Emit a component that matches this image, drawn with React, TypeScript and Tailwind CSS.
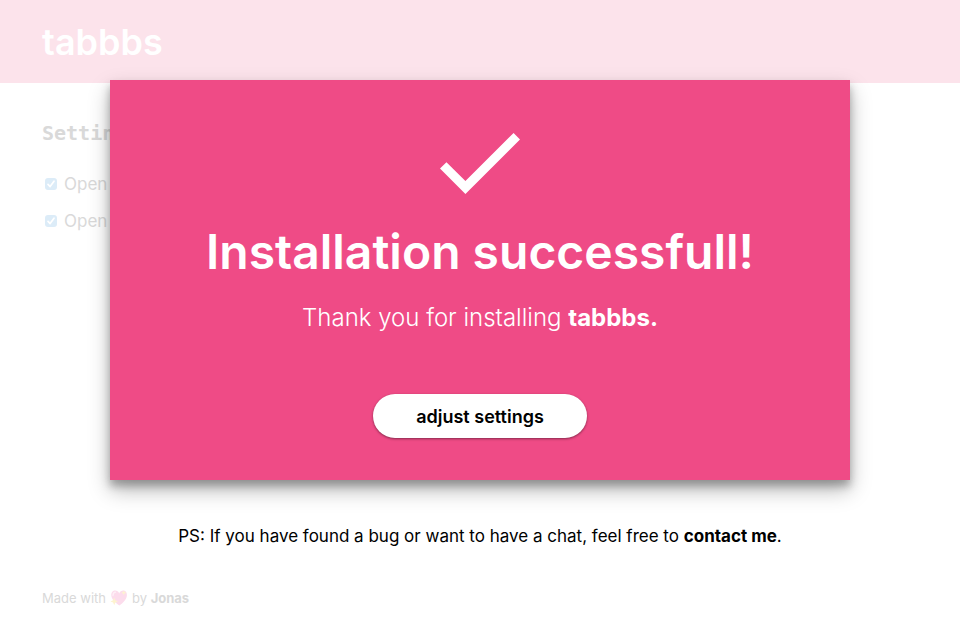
import React from "react";

function Setting({ id, label }: { id: string; label: string }) {
  return (
    <div className="flex h-[37px] items-center gap-[7px] pl-[3px]">
      <span className="grid size-3 place-items-center">
        <input
          id={id}
          type="checkbox"
          defaultChecked
          className="col-start-1 row-start-1 size-3 appearance-none rounded-[3px] bg-[#dcecf8]"
        />
        <svg
          viewBox="0 0 12 12"
          className="pointer-events-none col-start-1 row-start-1 size-3"
          fill="none"
          stroke="white"
          strokeWidth="1.7"
          strokeLinecap="round"
          strokeLinejoin="round"
          aria-hidden="true"
        >
          <path d="M3 6.4 5.1 8.6 9 3.2" />
        </svg>
      </span>
      <label htmlFor={id} className="text-[17px] leading-6">
        {label}
      </label>
    </div>
  );
}

function Heart() {
  return (
    <svg viewBox="0 0 18 18" className="size-[18px]" role="img" aria-label="love">
      <path
        d="M9.4 16.6C5.4 13.8 1.6 10.6 1.3 6.6 1 3.5 3 1.6 5.2 1.6c1.8 0 3.2 1 4 2.8.8-1.8 2.2-2.8 4-2.8 2.4 0 4 2 3.7 4.9-.4 4-3.9 7.4-7.5 10.1z"
        fill="#fcdcec"
      />
      <path d="M3 6.500c0-2 1-3.200 2.600-3.300" stroke="#fef0f7" strokeWidth="1.3" fill="none" strokeLinecap="round" />
      <path
        d="M4.2 8.6 5.3 11.3 8 12.4 5.3 13.5 4.2 16.2 3.1 13.5.4 12.4 3.1 11.3zM13.8 1.2l.7 1.800 1.800.7-1.800.7-.7 1.800-.7-1.800-1.800-.7 1.800-.7z"
        fill="#fdf3cf"
      />
    </svg>
  );
}

export default function App() {
  return (
    <div className="relative flex min-h-screen flex-col bg-white font-['Inter','Liberation_Sans',sans-serif] text-[#d9d9d9]">
      <header className="flex h-[83px] items-center bg-[#fce3eb] px-[42px]">
        <h1 className="text-[36px] leading-10 font-semibold text-white">tabbbs</h1>
      </header>

      <main className="flex-1 px-[42px] pt-9">
        <h2 className="mb-[18px] font-['DejaVu_Sans_Mono',monospace] text-[20px] leading-7 font-bold">
          Settings
        </h2>
        <Setting id="open-first" label="Open" />
        <Setting id="open-second" label="Open" />
      </main>

      <footer className="flex items-center gap-1 px-[42px] pb-[22px] text-[13px] leading-5">
        <span>Made with</span>
        <Heart />
        <span>
          by{" "}
          <a href="#jonas" className="font-bold">
            Jonas
          </a>
        </span>
      </footer>

      <div className="absolute inset-0 flex flex-col items-center px-6 pt-20">
        <section
          role="dialog"
          aria-labelledby="dialog-title"
          className="flex w-full max-w-[740px] flex-col items-center bg-[#ef4b86] px-6 pt-[53px] pb-[42px] text-white shadow-[0_10px_20px_rgba(0,0,0,0.28),0_6px_8px_rgba(0,0,0,0.26)]"
        >
          <svg viewBox="3.41 5.59 17.59 13.41" className="h-[61px] w-20" fill="currentColor" aria-hidden="true">
            <path d="M9 16.17 4.83 12l-1.42 1.41L9 19 21 7l-1.41-1.41z" />
          </svg>
          <h2 id="dialog-title" className="mt-7 text-center text-[48px] leading-[60px] font-semibold">
            Installation successfull!
          </h2>
          <p className="mt-5 text-center text-[24px] leading-8 font-light">
            Thank you for installing <strong className="font-bold">tabbbs.</strong>
          </p>
          <button
            type="button"
            className="mt-[60px] h-11 w-[214px] rounded-full bg-white text-[18px] font-semibold text-black shadow-[0_1px_3px_rgba(0,0,0,0.24),0_1px_2px_rgba(0,0,0,0.24)]"
          >
            adjust settings
          </button>
        </section>
        <p className="mt-11 text-center text-[17px] leading-6 text-black">
          PS: If you have found a bug or want to have a chat, feel free to{" "}
          <a href="#contact" className="font-bold">
            contact me
          </a>
          .
        </p>
      </div>
    </div>
  );
}
